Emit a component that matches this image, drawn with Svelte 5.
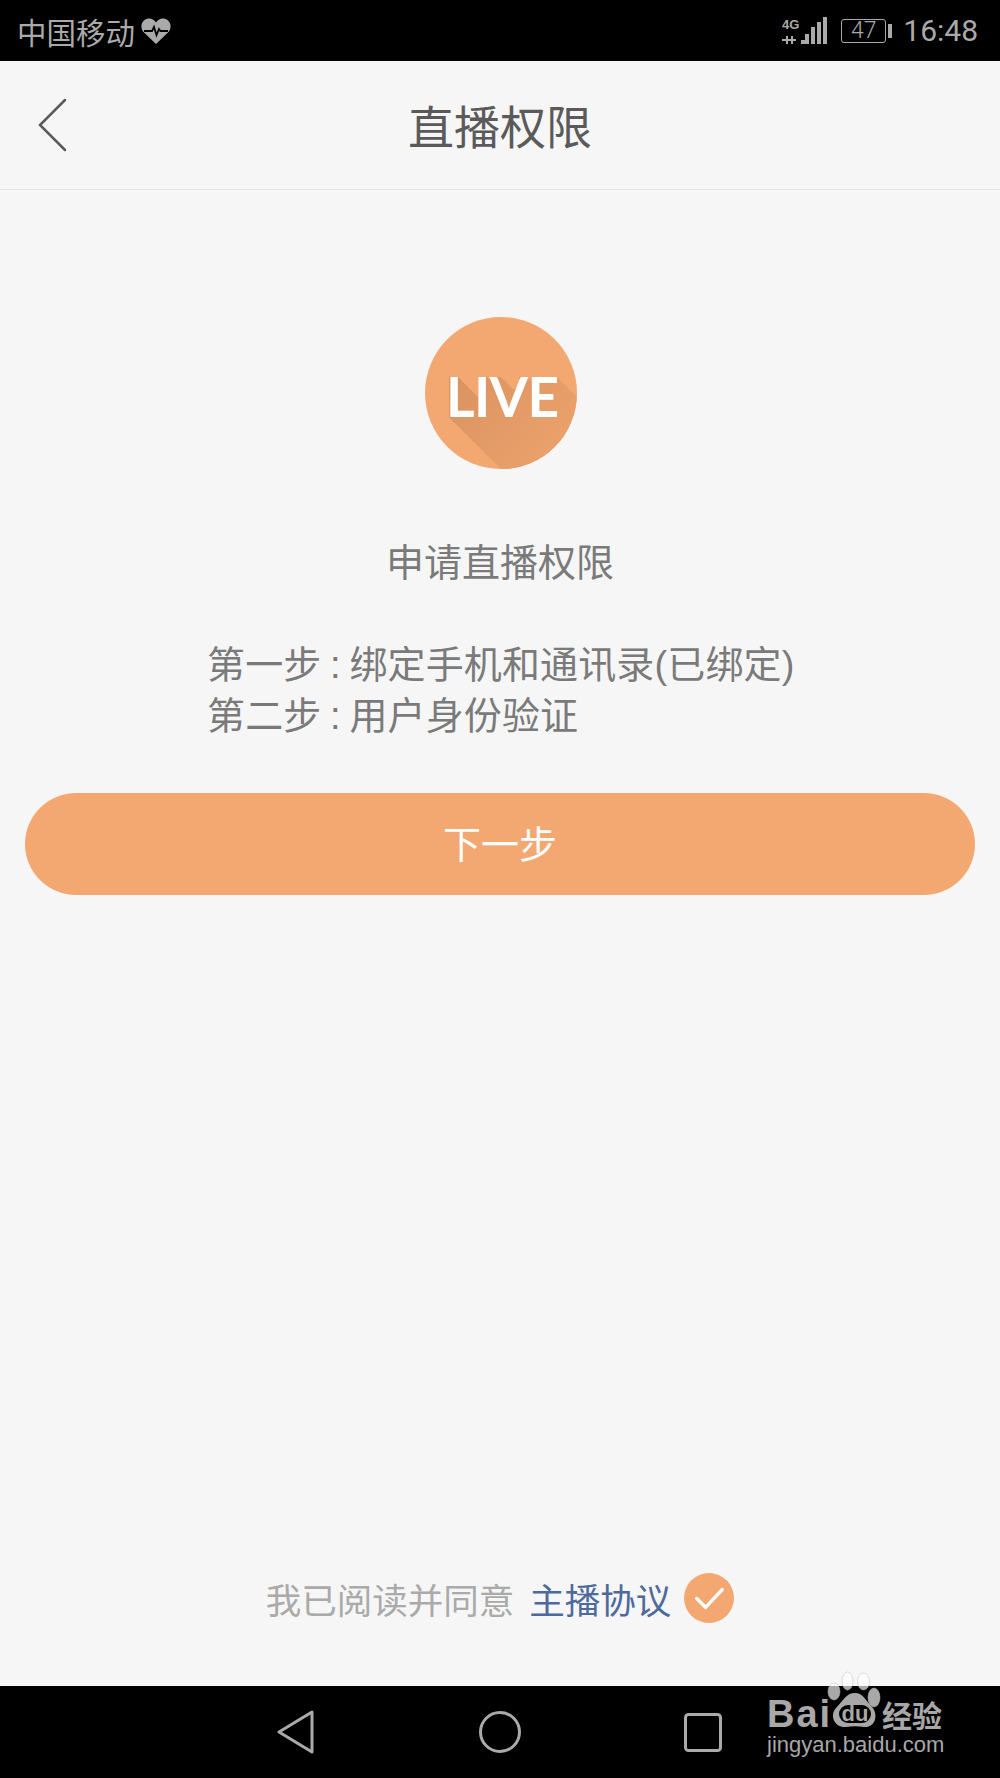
<script lang="ts">
  const steps = ['第一步 : 绑定手机和通讯录(已绑定)', '第二步 : 用户身份验证']
  const bars = [
    { x: 19, h: 4 },
    { x: 23, h: 10 },
    { x: 29, h: 17 },
    { x: 35, h: 22 },
    { x: 41, h: 27 }
  ]
  // long shadow: a box swept along the diagonal
  const swept = ([x1, y1, x2, y2]: number[], d = 110) =>
    `${x1},${y1} ${x2},${y1} ${x2 + d},${y1 + d} ${x2 + d},${y2 + d} ${x1 + d},${y2 + d} ${x1},${y2}`
  const letterBoxes = [
    [24, 60, 33, 100],
    [24, 92, 46, 100],
    [53, 60, 62, 100],
    [68, 60, 76, 100],
    [76, 72, 94, 100],
    [94, 60, 102, 100],
    [110, 60, 132, 100]
  ]
</script>

<div class="page">
  <div class="status">
    <div class="carrier">
      <span>中国移动</span>
      <svg width="30" height="28" viewBox="0 0 30 28">
        <path
          d="M15 27 L3 15.500 C-1.500 11 0 3 7 1.500 C10 1 13 2.500 15 5.500 C17 2.500 20 1 23 1.500 C30 3 31.500 11 27 15.500 Z"
          fill="#aaa"
        />
        <path d="M3 14 H11 L13 10 L15.500 18 L18 12 L19.500 14 H27" fill="none" stroke="#000" stroke-width="1.800" />
      </svg>
    </div>
    <div class="indicators">
      <svg width="46" height="28" viewBox="0 0 46 28" class="signal">
        <text x="0" y="12" class="net">4G</text>
        <path d="M0 23 H14 M5 19 V27 M10 19 V27" stroke="#aaa" stroke-width="2" fill="none" />
        {#each bars as b}
          <rect x={b.x} y={27 - b.h} width="4" height={b.h} fill="#aaa" />
        {/each}
      </svg>
      <div class="battery"><span>47</span></div>
      <div class="nub"></div>
      <span class="time">16:48</span>
    </div>
  </div>

  <header class="nav">
    <svg class="back" width="30" height="54" viewBox="0 0 30 54">
      <path d="M27 2 L2 27 L27 52" fill="none" stroke="#5a5a5a" stroke-width="2.500" stroke-linecap="round" />
    </svg>
    <h1>直播权限</h1>
  </header>

  <main class="content">
    <svg class="live" width="152" height="152" viewBox="0 0 152 152">
      <defs>
        <clipPath id="disc"><circle cx="76" cy="76" r="76" /></clipPath>
        <linearGradient id="fade" gradientUnits="userSpaceOnUse" x1="30" y1="60" x2="130" y2="150">
          <stop offset="0" stop-color="#d99361" />
          <stop offset="1" stop-color="#eda26c" />
        </linearGradient>
      </defs>
      <circle cx="76" cy="76" r="76" fill="#f3a871" />
      <g clip-path="url(#disc)">
        {#each letterBoxes as box}
          <polygon points={swept(box)} fill="url(#fade)" />
        {/each}
      </g>
      <text x="21" y="100" class="live-text" textLength="113" lengthAdjust="spacing">LIVE</text>
    </svg>

    <p class="apply">申请直播权限</p>

    <div class="steps">
      {#each steps as s}
        <div>{s}</div>
      {/each}
    </div>

    <button class="next">下一步</button>

    <div class="agree">
      <span class="grey">我已阅读并同意</span>
      <span class="link">主播协议</span>
      <svg width="50" height="50" viewBox="0 0 51 51">
        <circle cx="25.500" cy="25.500" r="25.500" fill="#f3a871" />
        <path d="M13 26 L22 35 L39 17" fill="none" stroke="#fff" stroke-width="3.500" stroke-linecap="round" stroke-linejoin="round" />
      </svg>
    </div>
  </main>

  <footer class="sysbar">
    <svg class="softkey tri" width="38" height="44" viewBox="0 0 38 44">
      <path d="M35 2 L2 22 L35 42 Z" fill="none" stroke="#aaa" stroke-width="3" stroke-linejoin="round" />
    </svg>
    <svg class="softkey circ" width="44" height="44" viewBox="0 0 44 44">
      <circle cx="22" cy="22" r="19.500" fill="none" stroke="#aaa" stroke-width="3" />
    </svg>
    <svg class="softkey sq" width="38" height="40" viewBox="0 0 38 40">
      <rect x="1.500" y="1.500" width="35" height="36" rx="3" fill="none" stroke="#aaa" stroke-width="3" />
    </svg>

    <div class="mark">
      <svg class="paw" width="56" height="62" viewBox="0 0 56 62">
        <ellipse cx="8" cy="23.500" rx="6" ry="8.500" class="toe" />
        <ellipse cx="21.500" cy="13" rx="5.500" ry="9" class="toe" />
        <ellipse cx="37.500" cy="13.500" rx="6" ry="8.500" class="toe" />
        <ellipse cx="48" cy="29.500" rx="6" ry="9.500" class="toe" />
        <path d="M29 25 C37 25 40 33 46 39 C53 47 49 60 38 59 C32 58 26 58 20 59 C9 60 3 48 10 40 C17 33 20 25 29 25 Z" fill="#a8a8a8" />
        <rect x="13" y="37" width="32" height="18" rx="9" fill="#000" />
        <text x="29" y="53" class="du">du</text>
      </svg>
      <div class="brand"><span class="bai">Bai</span><span class="jy">经验</span></div>
      <div class="url">jingyan.baidu.com</div>
    </div>
  </footer>
</div>

<style>
  :global(body) {
    margin: 0;
    background: #f6f6f6;
  }

  .page {
    position: relative;
    display: flex;
    flex-direction: column;
    width: 1000px;
    height: 1778px;
    overflow: hidden;
    font-family: 'Liberation Sans', 'Noto Sans CJK SC', sans-serif;
  }

  .status {
    display: flex;
    align-items: center;
    justify-content: space-between;
    height: 61px;
    padding: 0 22px 0 17px;
    background: #000;
    color: #aaa;
    flex: none;
    box-sizing: border-box;
  }

  .carrier {
    display: flex;
    align-items: center;
    gap: 6px;
    font-size: 29.500px;
  }

  .indicators {
    display: flex;
    align-items: center;
  }

  .signal {
    margin-right: 13px;
  }

  .net {
    font: bold 13px 'Liberation Sans', sans-serif;
    fill: #aaa;
  }

  .battery {
    display: flex;
    align-items: center;
    justify-content: center;
    width: 45px;
    height: 24px;
    border: 1.500px solid #aaa;
    border-radius: 3px;
    box-sizing: border-box;
    font-family: Roboto, sans-serif;
    font-weight: 300;
    font-size: 23px;
  }

  .nub {
    width: 4px;
    height: 14px;
    margin-left: 2px;
    background: #aaa;
  }

  .time {
    margin-left: 11px;
    font-family: Roboto, sans-serif;
    font-size: 30px;
  }

  .nav {
    display: flex;
    align-items: center;
    justify-content: center;
    position: relative;
    height: 129px;
    padding-bottom: 2px;
    border-bottom: 1px solid #e3e3e3;
    background: #f6f6f6;
    box-sizing: border-box;
    flex: none;
  }

  .back {
    position: absolute;
    left: 38px;
    top: 37px;
  }

  h1 {
    margin: 0;
    font-size: 46px;
    font-weight: 400;
    color: #5a5a5a;
  }

  .content {
    display: flex;
    flex-direction: column;
    align-items: center;
    flex: 1;
    padding-top: 127px;
    background: #f6f6f6;
  }

  .live {
    margin-left: 2px;
  }

  .live-text {
    font: 700 55px Lato, 'Open Sans', sans-serif;
    fill: #fff;
  }

  .apply {
    margin: 67px 0 0;
    font-size: 38px;
    line-height: 54px;
    color: #7a7a7a;
  }

  .steps {
    align-self: flex-start;
    margin: 50px 0 0 207px;
    font-size: 38px;
    line-height: 51px;
    word-spacing: -2px;
    letter-spacing: 0.130px;
    color: #7a7a7a;
  }

  .next {
    width: 950px;
    height: 102px;
    margin-top: 51px;
    padding: 0 0 6px;
    border: 0;
    border-radius: 51px;
    background: #f3a871;
    color: #fff;
    font: inherit;
    font-size: 38px;
  }

  .agree {
    display: flex;
    align-items: center;
    margin-top: auto;
    margin-bottom: 63px;
    font-size: 35.500px;
  }

  .agree span {
    position: relative;
    top: 1px;
  }

  .grey {
    color: #aaa;
  }

  .link {
    margin-left: 15px;
    color: #4e6a9c;
  }

  .agree svg {
    margin-left: 13px;
  }

  .sysbar {
    position: relative;
    height: 92px;
    background: #000;
    flex: none;
  }

  .softkey {
    position: absolute;
  }

  .tri {
    left: 277px;
    top: 24px;
  }

  .circ {
    left: 478px;
    top: 24px;
  }

  .sq {
    left: 684px;
    top: 27px;
  }

  .mark {
    position: absolute;
    left: 767px;
    top: -18px;
    width: 178px;
    color: #a8a8a8;
  }

  .paw {
    position: absolute;
    left: 59px;
    top: 0;
  }

  /* the watermark is translucent white: pale over the page, grey over the bar */
  .toe {
    fill: rgba(255, 255, 255, 0.66);
    stroke: rgba(190, 190, 190, 0.5);
    stroke-width: 1;
  }

  .du {
    font: bold 22px 'Liberation Sans', sans-serif;
    fill: #a8a8a8;
    text-anchor: middle;
  }

  .brand {
    display: flex;
    justify-content: space-between;
    align-items: center;
    height: 44px;
    margin-top: 24px;
  }

  .bai {
    font-size: 38px;
    font-weight: 700;
    letter-spacing: 2px;
  }

  .jy {
    font-size: 30px;
    font-weight: 700;
    margin-right: 3px;
  }

  .url {
    margin-top: -3px;
    font-size: 22px;
    line-height: 24px;
    white-space: nowrap;
  }
</style>
